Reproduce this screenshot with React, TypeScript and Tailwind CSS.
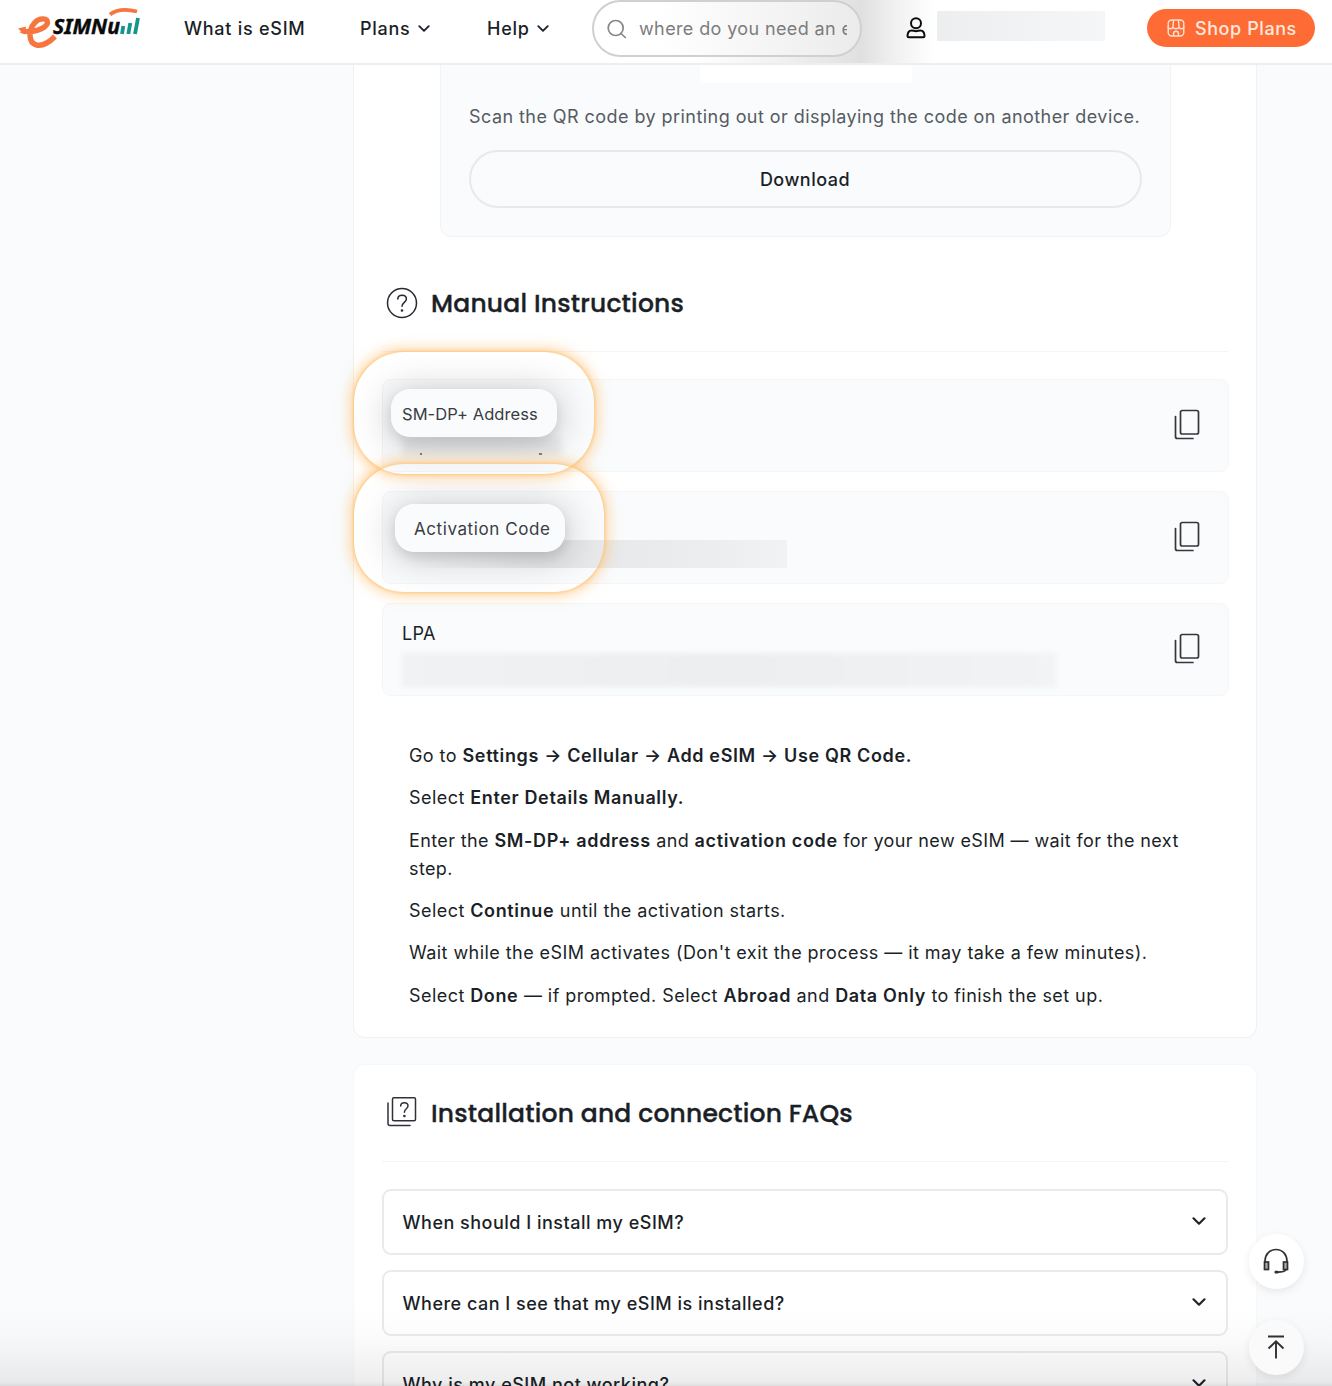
import type { ReactNode } from "react";
import clsx from "clsx";

const faqs = [
  "When should I install my eSIM?",
  "Where can I see that my eSIM is installed?",
  "Why is my eSIM not working?",
];

export default function App() {
  return (
    <div className="relative h-[1386px] w-[1332px] overflow-hidden bg-[#f9fbfc] font-['Inter',sans-serif] text-[18px] text-[#1b1f27]">
      <Header />

      <main className="ml-[353px] w-[904px]">
        <section className="h-[973px] rounded-b-[12px] border border-t-0 border-[#eff1f2] bg-white px-[28px]">
          <QrPanel />
          <SectionTitle icon={<HelpIcon />} title="Manual Instructions" className="mt-[18px]" />

          <div className="mt-[27px] flex flex-col gap-[19px]">
            <CodeRow>
              <div className="ml-[19px] mt-[58px] h-[18px] w-[160px] bg-[#ecedef] blur-[3px]" />
              <div className="absolute left-[37px] top-[73px] flex w-[122px] justify-between">
                <i className="h-[2px] w-[2px] bg-[#77797e]" />
                <i className="h-[2px] w-[3px] bg-[#77797e]" />
              </div>
              <Highlight
                label="SM-DP+ Address"
                ringClassName="-left-[29px] -top-[28px] h-[122px] w-[240px]"
                shadeClassName="ml-[37px] mt-[37px] w-[166px]"
                pillClassName="left-[8px] top-[9px] w-[166px] pl-[11px] text-[16.5px] tracking-[0.06px]"
              />
            </CodeRow>
            <CodeRow>
              <div className="ml-[18px] mt-[48px] h-[28px] w-[386px] bg-[linear-gradient(90deg,transparent,#e6e7e9_40%,#eaebed_70%,#f1f2f4)]" />
              <Highlight
                label="Activation Code"
                ringClassName="-left-[29px] -top-[28px] h-[128px] w-[250px]"
                shadeClassName="ml-[41px] mt-[40px] w-[170px]"
                pillClassName="left-[12px] top-[12px] w-[170px] pl-[19px] pt-[4px] text-[17px] tracking-[0.58px]"
              />
            </CodeRow>
            <CodeRow>
              <p className="ml-[19px] mt-[18px] text-[18px] leading-[24px] tracking-[0.3px]">LPA</p>
              <div className="ml-[19px] mt-[7px] h-[34px] w-[654px] bg-linear-to-r from-[#f1f2f3] via-[#edeeef] to-[#f2f3f4] blur-[2px]" />
            </CodeRow>
          </div>

          <Instructions />
        </section>

        <section className="mt-[26px] rounded-t-[12px] border border-[#f7f8f9] bg-white px-[28px]">
          <SectionTitle icon={<FaqIcon />} title="Installation and connection FAQs" />
          <div className="mt-[27px] flex flex-col gap-[15px]">
            {faqs.map((question) => (
              <div
                key={question}
                className="flex h-[66px] items-center justify-between rounded-[9px] border-2 border-[#e9eaec] bg-white pl-[18.5px] pr-[20px]"
              >
                <span className="font-medium tracking-[0.5px]">{question}</span>
                <Chevron className="mb-[2px] h-[8px] w-[14px]" />
              </div>
            ))}
          </div>
        </section>
      </main>

      <div className="absolute inset-x-0 bottom-0 h-[80px] bg-[linear-gradient(180deg,transparent,rgba(0,0,0,0.015)_40%,rgba(0,0,0,0.07)_95%,rgba(0,0,0,0.13))]" />

      <button className="absolute left-[1249px] top-[1234px] flex size-[55px] items-center justify-center rounded-full bg-white pb-[2px] pr-[1px] shadow-[0_3px_8px_rgba(0,0,0,0.08)]">
        <HeadsetIcon />
      </button>
      <button className="absolute left-[1249px] top-[1320px] flex size-[55px] items-center justify-center rounded-full bg-[#fafafa] pb-[1px] pr-[1px] shadow-[0_3px_8px_rgba(0,0,0,0.08)]">
        <ToTopIcon />
      </button>
    </div>
  );
}

function Header() {
  return (
    <header className="relative flex h-[65px] items-start border-b-2 border-[#eceef0] bg-white">
      <div className="absolute left-[690px] top-0 h-[63px] w-[245px] bg-[linear-gradient(90deg,transparent,rgba(0,0,0,0.05)_35%,rgba(0,0,0,0.12)_70%,rgba(0,0,0,0.06)_83%,transparent)]" />
      <Logo />
      <nav className="flex h-[57px] items-center font-medium tracking-[0.74px]">
        <a className="ml-[42px] w-[176px]">What is eSIM</a>
        <a className="flex w-[127px] items-center gap-[7px]">
          Plans <Chevron className="h-[7px] w-[12px]" />
        </a>
        <a className="flex w-[105px] items-center gap-[7px]">
          Help <Chevron className="h-[7px] w-[12px]" />
        </a>
      </nav>
      <div className="relative flex h-[57px] w-[270px] items-center rounded-full border-2 border-[#d0d0d0] bg-[linear-gradient(90deg,#fff_25%,#f1f1f1_80%,#ebebeb)] pl-[13px]">
        <SearchIcon />
        <span className="ml-[12px] w-[208px] overflow-hidden whitespace-nowrap tracking-[0.38px] text-[#7c7c7e]">
          where do you need an eSIM
        </span>
      </div>
      <UserIcon />
      <div className="relative ml-[11px] mt-[11px] h-[30px] w-[168px] bg-linear-to-r from-[#eceef0] to-[#f5f6f7]" />
      <button className="ml-[42px] mt-[9px] flex h-[38px] w-[168px] items-center rounded-full bg-[#ff6b35] pl-[20px] font-medium tracking-[0.58px] text-[#ffe9df]">
        <ShopIcon />
        <span className="ml-[10px] whitespace-nowrap">Shop Plans</span>
      </button>
    </header>
  );
}

function QrPanel() {
  return (
    <div className="ml-[58px] flex h-[172px] w-[731px] flex-col rounded-b-[12px] border border-t-0 border-[#f1f3f4] bg-[#f9fbfc] px-[28px]">
      <div className="ml-[231px] h-[18px] w-[212px] bg-white" />
      <p className="mt-[20px] whitespace-nowrap leading-[28px] tracking-[0.44px] text-[#565b63]">
        Scan the QR code by printing out or displaying the code on another device.
      </p>
      <button className="mt-[19px] h-[58px] w-[673px] rounded-full border-2 border-[#e8e9eb] pr-[1px] font-medium tracking-[0.5px]">
        Download
      </button>
    </div>
  );
}

interface SectionTitleProps {
  icon: ReactNode;
  title: string;
  className?: string;
}

function SectionTitle({ icon, title, className }: SectionTitleProps) {
  return (
    <div className={clsx("flex h-[97px] items-center border-b border-[#f3f4f5] pl-[4px]", className)}>
      {icon}
      <h2 className="ml-[13px] mt-[2px] whitespace-nowrap font-['Poppins','Inter',sans-serif] text-[25px] font-medium tracking-[0.2px] [-webkit-text-stroke:0.35px_#1b1f27]">
        {title}
      </h2>
    </div>
  );
}

function CodeRow({ children }: { children: ReactNode }) {
  return (
    <div className="relative flow-root h-[93px] w-[847px] rounded-[9px] border border-[#f4f5f6] bg-[#f9fbfc]">
      {children}
      <svg viewBox="0 0 26 31" className="absolute right-[28px] top-[29px] h-[31px] w-[26px]" fill="none" stroke="#35363b" strokeWidth="1.7" strokeLinecap="round">
        <rect x="6.5" y="1.5" width="18" height="23.5" rx="1.8" />
        <path d="M1.5 7.5v20a2 2 0 0 0 2 2H19" />
      </svg>
    </div>
  );
}

interface HighlightProps {
  label: string;
  ringClassName: string;
  shadeClassName: string;
  pillClassName: string;
}

// Glowing callout around a field label, the wide shade stays inside the ring
function Highlight({ label, ringClassName, shadeClassName, pillClassName }: HighlightProps) {
  return (
    <>
      <div className={clsx("absolute z-10 overflow-hidden rounded-[50px]", ringClassName)}>
        <div className={clsx("h-[48px] rounded-[20px] shadow-[0_4px_36px_6px_rgba(0,0,0,0.17)]", shadeClassName)} />
      </div>
      <div
        className={clsx(
          "absolute z-10 rounded-[50px] shadow-[0_0_3px_1px_rgba(255,195,115,0.8),0_0_13px_4px_rgba(255,190,110,0.6)]",
          ringClassName
        )}
      />
      <div
        className={clsx(
          "absolute z-20 flex h-[48px] items-center whitespace-nowrap rounded-[19px] bg-[#fafbfd] pt-[2px] text-[#393c43] shadow-[0_5px_12px_rgba(0,0,0,0.1)]",
          pillClassName
        )}
      >
        {label}
      </div>
    </>
  );
}

function Instructions() {
  return (
    <div className="ml-[27px] mt-[46px] flex flex-col gap-[14px] whitespace-nowrap leading-[28.3px] tracking-[0.44px] [&_b]:font-semibold [&_b]:tracking-[0.64px]">
      <p>
        Go to <b>Settings → Cellular → Add eSIM → Use QR Code.</b>
      </p>
      <p>
        Select <b>Enter Details Manually.</b>
      </p>
      <p className="tracking-[0.38px]">
        Enter the <b>SM-DP+ address</b> and <b>activation code</b> for your new eSIM — wait for the next
        <br />
        step.
      </p>
      <p>
        Select <b>Continue</b> until the activation starts.
      </p>
      <p>Wait while the eSIM activates (Don't exit the process — it may take a few minutes).</p>
      <p>
        Select <b>Done</b> — if prompted. Select <b>Abroad</b> and <b>Data Only</b> to finish the set up.
      </p>
    </div>
  );
}

function Logo() {
  return (
    <svg viewBox="0 0 142 57" className="h-[57px] w-[142px] shrink-0" fill="none">
      <path d="M21 30.500c11 3.500 25-2 26.500-7.500 1-5-8-6-13 0-6 7-6.500 20 2 22 6.500 1.300 13-3 18.500-8.500" stroke="#f7753e" strokeWidth="5.400" />
      <path d="M18 28.500l8-2-1.500 8z" fill="#f7753e" />
      <path d="M110 14.500c7-5.500 17-5.500 27-3" stroke="#f7753e" strokeWidth="3.800" />
      <text x="53" y="33.500" textLength="67" lengthAdjust="spacingAndGlyphs" fill="#0b0b0b" stroke="#0b0b0b" strokeWidth="0.400" fontFamily="Noto Sans" fontSize="21.500" fontWeight="700" fontStyle="italic">
        SIMNu
      </text>
      <path d="M122 34l1.300-8M128.300 34l2-11M135 34l3-16" stroke="#16958a" strokeWidth="3.800" />
    </svg>
  );
}

function Chevron({ className }: { className: string }) {
  return (
    <svg viewBox="0 0 14 8" className={className} fill="none" stroke="#20232b" strokeWidth="2.2" strokeLinecap="round" strokeLinejoin="round">
      <path d="M1.500 1.300L7 6.700l5.500-5.400" />
    </svg>
  );
}

function SearchIcon() {
  return (
    <svg viewBox="0 0 20 20" className="size-[20px] shrink-0" fill="none" stroke="#88888a" strokeWidth="1.7" strokeLinecap="round">
      <circle cx="8.700" cy="9" r="7.500" />
      <path d="M14 14.500l4.300 4" />
    </svg>
  );
}

function UserIcon() {
  return (
    <svg viewBox="0 0 20 22" className="relative ml-[44px] mt-[17px] h-[22px] w-[20px]" fill="none" stroke="#0c0c0e" strokeWidth="2" strokeLinejoin="round">
      <circle cx="10" cy="6.300" r="5" />
      <path d="M1.500 19c0-3.500 1.300-5.600 4.200-5.600 1.500 0 2.500.8 4.300.8s2.800-.8 4.300-.8c2.900 0 4.200 2.100 4.200 5.600 0 .8-.4 1.200-1.200 1.200H2.700c-.8 0-1.200-.4-1.200-1.200z" />
    </svg>
  );
}

function ShopIcon() {
  return (
    <svg viewBox="0 0 18 18" className="size-[18px]" fill="none" stroke="#ffe0d2" strokeWidth="1.400" strokeLinejoin="round">
      <rect x="1.200" y="1" width="15.600" height="16" rx="3.500" />
      <path d="M1 7.500c0 3 4.500 3 5 0 0 3 6 3 6 0 .5 3 5 3 5 0M6 7.500L6.600 1M12 7.500L11.400 1M6.500 17v-2.500c0-3 5-3 5 0V17" />
    </svg>
  );
}

function HelpIcon() {
  return (
    <svg viewBox="0 0 32 32" className="size-[32px]" fill="none" stroke="#292b30" strokeWidth="1.500" strokeLinecap="round">
      <circle cx="16" cy="16" r="14.500" />
      <path d="M11.800 12c0-5 8.600-5 8.600 0 0 3.300-4.400 3.500-4.400 7.300" />
      <circle cx="16" cy="23.500" r=".6" fill="#292b30" />
    </svg>
  );
}

function FaqIcon() {
  return (
    <svg viewBox="0 0 32 32" className="mb-[2px] size-[32px]" fill="none" stroke="#303238" strokeWidth="1.500" strokeLinecap="round">
      <rect x="6.500" y="1.700" width="23" height="23" rx="1.500" />
      <path d="M2 7v20.500a2 2 0 0 0 2 2h20M14.700 10c0-4.300 7.300-4.300 7.300 0 0 2.700-3.600 2.800-3.600 6.200" />
      <circle cx="18.400" cy="20" r=".6" fill="#303238" />
    </svg>
  );
}

function HeadsetIcon() {
  return (
    <svg viewBox="0 0 26 26" className="size-[26px]" fill="none" stroke="#2f3034" strokeWidth="1.700">
      <path d="M2 14v-1C2 6.500 6.500 1.500 13 1.500S24 6.500 24 13v1M23.500 21c-1 2.500-4 3.200-9 3.200" />
      <rect x="1.500" y="14" width="4" height="7.500" fill="#aaa" />
      <rect x="20.500" y="14" width="4" height="7.500" fill="#aaa" />
      <rect x="11.500" y="22.700" width="4" height="2.800" rx="1" fill="#2f3034" stroke="none" />
    </svg>
  );
}

function ToTopIcon() {
  return (
    <svg viewBox="0 0 18 24" className="h-[24px] w-[18px]" fill="none" stroke="#303136" strokeWidth="1.900">
      <path d="M1 1.500h16M9 23.500V6.500M1.500 13.500L9 6.300l7.500 7.200" />
    </svg>
  );
}
